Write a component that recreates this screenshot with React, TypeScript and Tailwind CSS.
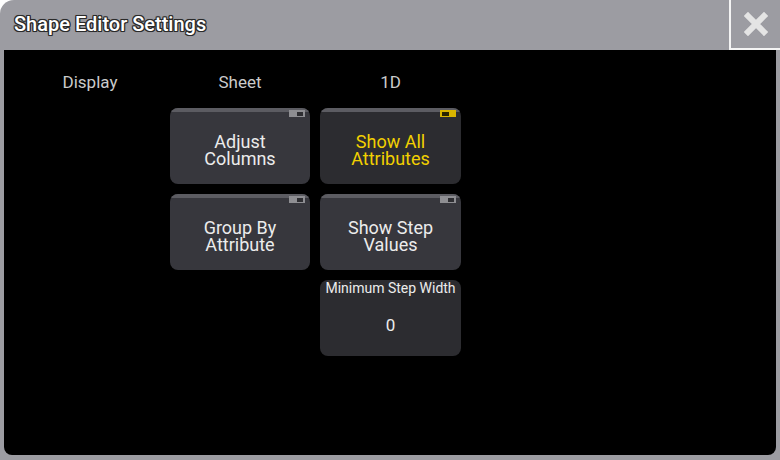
import React from "react";

function Indicator({ on }: { on: boolean }) {
  return on ? (
    <div className="absolute right-[5px] top-[2px] w-[16px] h-[7px] bg-[#d8b400] flex items-center pl-[2px]">
      <div className="w-[7px] h-[4px] bg-[#2a2400]" />
    </div>
  ) : (
    <div className="absolute right-[5px] top-[2px] w-[16px] h-[7px] bg-[#8e8e92] flex items-center justify-end pr-[2px]">
      <div className="w-[6px] h-[4px] bg-[#2e2e32]" />
    </div>
  );
}

function Btn({ lines, on = false, dark = false }: { lines: string[]; on?: boolean; dark?: boolean }) {
  return (
    <div
      className={`relative h-[76px] rounded-[8px] overflow-hidden flex flex-col items-center justify-center ${
        dark ? "bg-[#2c2c30]" : "bg-[#37373d]"
      }`}
    >
      <div className="absolute left-0 right-0 top-0 h-[4px] bg-[#5c5c62]" />
      <Indicator on={on} />
      <div
        className={`text-[18px] leading-[17px] text-center mt-[8px] ${on ? "text-[#f2d000]" : "text-[#ececec]"}`}
      >
        {lines.map((l) => (
          <div key={l}>{l}</div>
        ))}
      </div>
    </div>
  );
}

export default function App() {
  return (
    <div
      className="w-[780px] h-[460px] bg-[#9c9ca2] rounded-tl-[14px] flex flex-col overflow-hidden"
      style={{ fontFamily: "Roboto, 'Liberation Sans', sans-serif" }}
    >
      <div className="h-[50px] flex items-stretch shrink-0">
        <div
          className="flex-1 pl-[14px] pt-[9px] text-[20px] font-medium text-white"
          style={{
            textShadow:
              "1px 0 0 #2a2a2a, -1px 0 0 #2a2a2a, 0 1px 0 #2a2a2a, 0 -1px 0 #2a2a2a, 1px 1px 0 #2a2a2a, -1px -1px 0 #2a2a2a, 1px -1px 0 #2a2a2a, -1px 1px 0 #2a2a2a, 0 0 2px #2a2a2a",
          }}
        >
          Shape Editor Settings
        </div>
        <div className="w-[51px] border-2 border-r-0 border-t-0 border-[#f4f4f4] bg-[#9c9ca2] flex items-center justify-center relative">
          <svg width="24" height="24" viewBox="0 0 24 24">
            <path d="M4 4 L20 20 M20 4 L4 20" stroke="#e4e4e4" strokeWidth="6" strokeLinecap="square" />
          </svg>
        </div>
      </div>
      <div className="flex-1 mx-[4px] mb-[5px] bg-black rounded-bl-[8px] rounded-br-[8px] pt-[20px] pl-[16px]">
        <div className="grid grid-cols-[140px_140px_141px] gap-x-[10px] gap-y-[10px]">
          <div className="text-center text-[17px] text-[#cbcbcb] h-[28px]">Display</div>
          <div className="text-center text-[17px] text-[#cbcbcb] h-[28px]">Sheet</div>
          <div className="text-center text-[17px] text-[#cbcbcb] h-[28px]">1D</div>
        </div>
        <div className="grid grid-cols-[140px_140px_141px] gap-x-[10px] gap-y-[10px] mt-[10px]">
          <div />
          <Btn lines={["Adjust", "Columns"]} />
          <Btn lines={["Show All", "Attributes"]} on dark />
          <div />
          <Btn lines={["Group By", "Attribute"]} />
          <Btn lines={["Show Step", "Values"]} />
          <div />
          <div />
          <div className="h-[76px] rounded-[8px] bg-[#2c2c30] flex flex-col items-center">
            <div className="text-[14px] text-[#ececec] mt-[0px] leading-[16px]">Minimum Step Width</div>
            <div className="text-[17px] text-[#ececec] mt-[17px]">0</div>
          </div>
        </div>
      </div>
    </div>
  );
}
